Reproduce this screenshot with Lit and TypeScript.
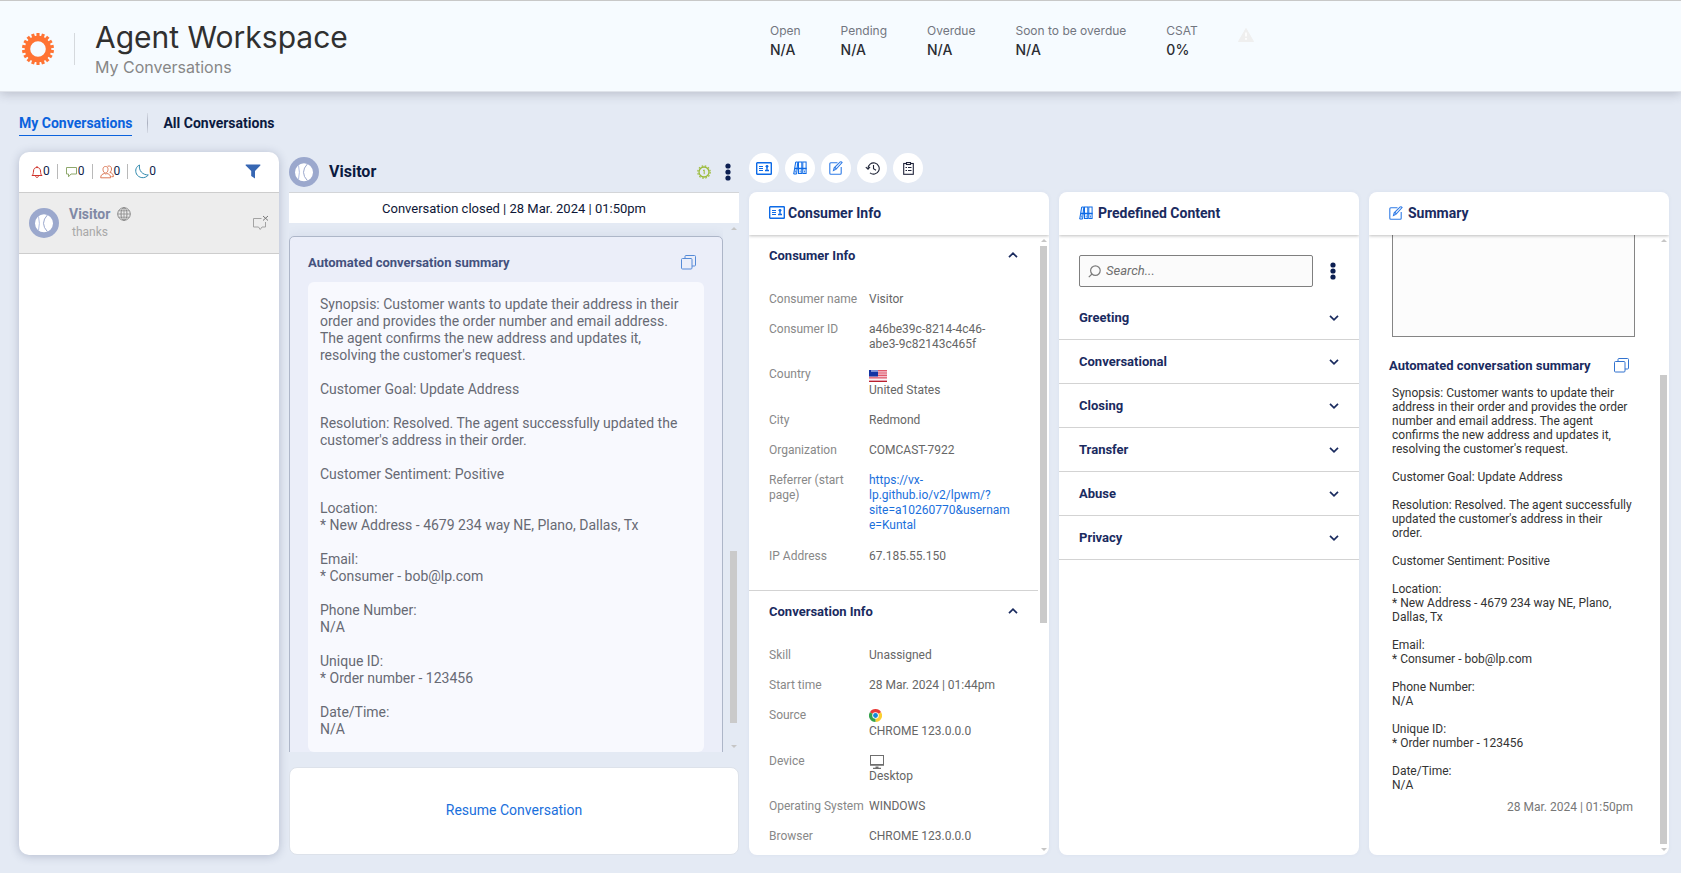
import { LitElement, html, css, svg, nothing } from "lit";
import { customElement, property } from "lit/decorators.js";
import { styleMap } from "lit/directives/style-map.js";

const SUMMARY = `Synopsis: Customer wants to update their address in their order and provides the order number and email address. The agent confirms the new address and updates it, resolving the customer's request.

Customer Goal: Update Address

Resolution: Resolved. The agent successfully updated the customer's address in their order.

Customer Sentiment: Positive

Location:
* New Address - 4679 234 way NE, Plano, Dallas, Tx

Email:
* Consumer - bob@lp.com

Phone Number:
N/A

Unique ID:
* Order number - 123456

Date/Time:
N/A`;

const gearTeeth = (count: number, cx: number, cy: number, r: number, w: number, h: number) =>
  Array.from({ length: count }, (_, i) => svg`<rect x=${cx - w / 2} y=${cy - r} width=${w} height=${h}
    transform="rotate(${(i * 360) / count} ${cx} ${cy})"></rect>`);

const logo = html`<svg class="logo" viewBox="0 0 32 32" width="32" height="32" aria-hidden="true">
  <circle cx="16" cy="16" r="10.5" fill="none" stroke="#ff7333" stroke-width="5.4"></circle>
  <g fill="#ff7333">${gearTeeth(18, 16, 16, 16, 3.1, 4)}</g></svg>`;

const avatar = html`<svg class="avatar" viewBox="0 0 30 30" width="30" height="30" aria-hidden="true">
  <circle cx="15" cy="15" r="15" fill="#9ba8cd"></circle>
  <circle cx="15" cy="15.300" r="9" fill="#fff"></circle>
  <path d="M9.500 8.300q1.800 7 0 14" fill="none" stroke="#b3bfe3" stroke-width="1"></path>
  <path d="M18.500 6.800q-8 8.500 0 17" fill="none" stroke="#9ba8cd" stroke-width="1"></path>
</svg>`;

const bell = html`<svg width="12" height="14" viewBox="0 0 12 14" fill="none" stroke="#d0342c" aria-hidden="true">
  <path d="M1 10.500c1.300-1 1.300-2.300 1.500-4.500C2.700 3.500 4 2.500 6 2.500S9.300 3.500 9.500 6c.2 2.200.2 3.500 1.500 4.500zM6 2.500V1M4.700 11c0 2 2.600 2 2.600 0"></path></svg>`;
const chat = html`<svg width="13" height="12" viewBox="0 0 13 12" fill="none" stroke="#8fa86c" aria-hidden="true">
  <path d="M1.500 1.500h10v6.500H6l-2.500 2.800V8h-2z"></path></svg>`;
const people = html`<svg width="14" height="14" viewBox="0 0 14 14" fill="none" stroke="#dc7a58" aria-hidden="true">
  <path d="M5.500 1.500c1.900 0 2.500 1.300 2.500 3S7 8 5.500 8 3 6.200 3 4.500s.6-3 2.500-3zM.7 12.800c0-3 1.700-3.800 3.800-4.300 1 .6 1.500.6 2.400 0 2 .5 3.700 1.300 3.700 4.300zM7.500 1.200c3-.8 4 .8 4 2.800 0 1.800-.8 2.800-1.700 3.400 2 .5 3.600 1.500 3.600 4.300h-2"></path></svg>`;
const moon = html`<svg width="14" height="15" viewBox="0 0 14 15" fill="none" stroke="#3089ad" aria-hidden="true">
  <path d="M4.500 1C1 2.500-.2 6.500 1.500 10c2 4 8.300 5.300 11.800 1C7.500 11 3.500 6.500 4.500 1z"></path></svg>`;
const funnel = html`<svg width="16" height="15" viewBox="0 0 16 15" fill="#3767b3" aria-hidden="true">
  <path d="M1 .5h14q.8.400.3 1L10 7v7.500L6.200 12V7L.7 1.500Q.3.900 1 .5z"></path></svg>`;
const globe = html`<svg width="14" height="14" viewBox="0 0 14 14" fill="none" stroke="#8a8a8a" aria-hidden="true">
  <circle cx="7" cy="7" r="6.300"></circle><ellipse cx="7" cy="7" rx="3" ry="6.300"></ellipse><path d="M7 .7v12.600M.7 7h12.600M1.700 3.800h10.600M1.700 10.200h10.600" stroke-width=".8"></path></svg>`;
const closedChat = html`<svg width="17" height="17" viewBox="0 0 17 17" fill="none" stroke="#a3a3a3" aria-hidden="true">
  <path d="M9.500 3.500H1.500v8.500h5l1.700 2.500L10 12h3.500V7"></path><path d="M11 1l5 4.500M16 1l-5 4.500" stroke="#777"></path></svg>`;
const rosette = html`<svg width="14" height="14" viewBox="0 0 14 14" fill="none" stroke="#9bbb38" aria-hidden="true">
  <circle cx="7" cy="7" r="5" stroke-width="1.300"></circle><circle cx="7" cy="7" r="6.200" stroke-width="1.200" stroke-dasharray="1.600 1.650"></circle>
  <path d="M6 5.700l1.200-.8v4.300"></path></svg>`;
const dots = html`<svg width="6" height="18" viewBox="0 0 6 18" fill="#0c1f52" aria-hidden="true">
  <circle cx="3" cy="3" r="2.600"></circle><circle cx="3" cy="9" r="2.600"></circle><circle cx="3" cy="15" r="2.600"></circle></svg>`;
const copy = html`<svg width="15" height="15" viewBox="0 0 15 15" fill="none" stroke="#3273cf" aria-hidden="true">
  <rect x=".5" y="3.500" width="10.500" height="10.500" rx="1"></rect><path d="M4 3.500V1.500q0-1 1-1h8.500q1 0 1 1V10q0 1-1 1H11"></path></svg>`;
const warning = html`<svg width="16" height="14" viewBox="0 0 16 14" aria-hidden="true">
  <path d="M8 .5L15.500 13.500H.5z" fill="#efefef" stroke="#efefef" stroke-linejoin="round"></path><path d="M8 4.500v4M8 10v1.700" stroke="#fff" stroke-width="1.600"></path></svg>`;
const idCard = html`<svg width="16" height="13" viewBox="0 0 16 13" fill="none" stroke="#0d6ae6" aria-hidden="true">
  <rect x=".7" y=".7" width="14.600" height="11.600" rx=".6" stroke-width="1.400"></rect><path d="M3 4.500h4M3 6.500h4M3 8.500h4"></path>
  <circle cx="11" cy="4.300" r="1.400" fill="#0d6ae6" stroke="none"></circle><path d="M10.300 5h1.400v2.700h1.300V9.200H9V7.700h1.300z" fill="#0d6ae6" stroke="none"></path></svg>`;
const binders = html`<svg width="14" height="14" viewBox="0 0 14 14" fill="none" stroke="#0d6ae6" aria-hidden="true">
  <path d="M2.700 1h2.100L3.600 13H.7z" fill="#e6f0ff"></path>
  <rect x="5.500" y="1" width="3.300" height="11.500" fill="#fff"></rect><rect x="9.800" y="1" width="3.300" height="11.500" fill="#fff"></rect>
  <path d="M2 7.500h11.600" stroke-width="1.500"></path><path d="M2.300 9.500v2M7.200 9.500v2M11.500 9.500v2" stroke-width=".8"></path></svg>`;
const compose = html`<svg width="14" height="14" viewBox="0 0 14 14" fill="none" stroke="#2f7be6" stroke-width="1.100" aria-hidden="true">
  <path d="M8.500 1.800H1.800q-1 0-1 1v9.400q0 1 1 1h9.400q1 0 1-1V6"></path><path d="M4.500 9.500l.7-2.600 6-6q1.200-.5 1.900.6l-6.200 6.900zM6 6.500l1.500 1.500"></path></svg>`;
const history = html`<svg width="15" height="13" viewBox="0 0 15 13" fill="none" stroke="#1f2437" stroke-width="1.100" aria-hidden="true">
  <path d="M3 6.500A5.600 5.600 0 1 1 5 10.800"></path><path d="M.8 5.200L3 7.200l2-2.400M8.500 3v3.800l2.500 1.400"></path></svg>`;
const clipboard = html`<svg width="11" height="13" viewBox="0 0 11 13" fill="none" stroke="#20243a" stroke-width="1.100" aria-hidden="true">
  <rect x=".7" y="1.500" width="9.600" height="10.800"></rect><rect x="3.500" y=".5" width="4" height="2" fill="#fff"></rect><path d="M2.500 5.500h1.500M5 5.500h3.500M2.500 8.500h1.500M5 8.500h3.500"></path></svg>`;
const magnifier = html`<svg class="magnifier" width="13" height="13" viewBox="0 0 13 13" fill="none" stroke="#7b7b7b" stroke-width="1.200" aria-hidden="true">
  <circle cx="7.400" cy="5.600" r="4.800"></circle><path d="M4 9L.8 12.200"></path></svg>`;
const chevron = (up: boolean) => html`<svg width="10" height="6" viewBox="0 0 10 6" fill="none" stroke="#1a2b5f" stroke-width="1.700" aria-hidden="true">
  <path d=${up ? "M1 5.200L5 1.200l4 4" : "M1 .8L5 4.800l4-4"}></path></svg>`;
const flag = html`<svg class="flag" width="18" height="12" viewBox="0 0 18 12" aria-hidden="true">
  <rect width="18" height="12" fill="#f3c3cf"></rect><path d="M0 .6h18M0 3h18M0 5.400h18M0 7.800h18" stroke="#e05a6b" stroke-width="1.200"></path>
  <path d="M0 9.300h18" stroke="#fff" stroke-width="1"></path><path d="M0 11.400h18" stroke="#b8202e" stroke-width="1.200"></path>
  <rect width="9" height="6.500" fill="#1434a4"></rect><rect x="2" width="7" height="2" fill="#7d8fd6"></rect></svg>`;
const chrome = html`<svg class="chrome" width="13" height="13" viewBox="0 0 26 26" aria-hidden="true">
  <path d="M13 13L1.740 6.500A13 13 0 0 1 24.260 6.500z" fill="#ea3b38"></path><path d="M13 13L24.260 6.500A13 13 0 0 1 13 26z" fill="#fccf31"></path>
  <path d="M13 13v13A13 13 0 0 1 1.740 6.500z" fill="#35a24c"></path><circle cx="13" cy="13" r="6.500" fill="#fff"></circle><circle cx="13" cy="13" r="4.800" fill="#1488d6"></circle></svg>`;
const desktop = html`<svg width="16" height="15" viewBox="0 0 16 15" aria-hidden="true">
  <rect x="1.500" y="1.500" width="13" height="9" fill="none" stroke="#6e6e6e"></rect><path d="M1 11h14M4 14.300h8" stroke="#6e6e6e" stroke-width="1.300"></path><path d="M6.500 12.500h3v1.500h-3z" fill="#6e6e6e"></path></svg>`;

type Field = { label: string; value: string; icon?: unknown; link?: boolean };

const CONSUMER: Field[] = [
  { label: "Consumer name", value: "Visitor" },
  { label: "Consumer ID", value: "a46be39c-8214-4c46-abe3-9c82143c465f" },
  { label: "Country", value: "United States", icon: flag },
  { label: "City", value: "Redmond" },
  { label: "Organization", value: "COMCAST-7922" },
  { label: "Referrer (start page)", value: "https://vx-lp.github.io/v2/lpwm/?site=a10260770&username=Kuntal", link: true },
  { label: "IP Address", value: "67.185.55.150" },
];
const CONVERSATION: Field[] = [
  { label: "Skill", value: "Unassigned" },
  { label: "Start time", value: "28 Mar. 2024 | 01:44pm" },
  { label: "Source", value: "CHROME 123.0.0.0", icon: chrome },
  { label: "Device", value: "Desktop", icon: desktop },
  { label: "Operating System", value: "WINDOWS" },
  { label: "Browser", value: "CHROME 123.0.0.0" },
];
const STATS = [["Open", "N/A"], ["Pending", "N/A"], ["Overdue", "N/A"], ["Soon to be overdue", "N/A"], ["CSAT", "0%"]];
const CATEGORIES = ["Greeting", "Conversational", "Closing", "Transfer", "Abuse", "Privacy"];
const COUNTERS = [
  { icon: bell, name: "Alerts" }, { icon: chat, name: "Messages" },
  { icon: people, name: "Consumers" }, { icon: moon, name: "Idle" },
];
const TOOLS = [
  { icon: idCard, name: "Consumer info" }, { icon: binders, name: "Predefined content" },
  { icon: compose, name: "Summary" }, { icon: history, name: "History" }, { icon: clipboard, name: "Forms" },
];

@customElement("scroll-rail")
class ScrollRail extends LitElement {
  /** Share of the track above the thumb, and the thumb's own share, in percent. */
  @property({ type: Number }) start = 0;
  @property({ type: Number }) size = 100;

  static styles = css`
    :host { display: flex; flex-direction: column; flex: none; width: 7px; margin-right: 2px; }
    .arrow { flex: none; height: 11px; display: flex; align-items: center; justify-content: center; }
    .arrow::before { content: ""; border: 3px solid transparent; border-top: 0; border-bottom-color: #c6c6c6; }
    .down::before { border-top: 3px solid #c6c6c6; border-bottom: 0; }
    .track { flex: 1; min-height: 0; }
    .thumb { background: #cacaca; }
  `;

  render() {
    return html`<div class="arrow"></div>
      <div class="track">
        <div style=${styleMap({ height: `${this.start}%` })}></div>
        <div class="thumb" style=${styleMap({ height: `${this.size}%` })}></div>
      </div>
      <div class="arrow down"></div>`;
  }
}

@customElement("app-root")
class AppRoot extends LitElement {
  static styles = css`
    :host {
      display: flex; flex-direction: column; box-sizing: border-box; height: 100vh; min-height: 640px;
      background: #e4eaf4; color: #0f1e4b; overflow: hidden;
      font: 12px/15px Roboto, "Liberation Sans", sans-serif;
    }
    *, *::before { box-sizing: border-box; }
    h1, h2, h3, p, dl, dd, dt, ul { margin: 0; padding: 0; font: inherit; }
    svg { display: block; flex: none; }
    button { border: 0; padding: 0; background: none; font: inherit; color: inherit; text-align: left; cursor: pointer; }
    a { color: #1a6fdc; text-decoration: none; }
    ul { list-style: none; }

    .columns { display: grid; grid-template-columns: 260px minmax(0, 450fr) minmax(0, 920fr); column-gap: 10px; padding: 0 12px 0 19px; }

    .top { flex: none; height: 92px; border-top: 1px solid #c8c8c8; border-bottom: 1px solid #dfe3ea; background: #f6fbff; box-shadow: 0 2px 10px rgba(50, 50, 70, .24); font-family: Inter, "Liberation Sans", sans-serif; }
    .brand { grid-column: span 2; display: flex; align-items: center; padding: 6px 0 0 3px; }
    .rule { width: 1px; height: 32px; margin: 0 20px; background: #d5d9dd; }
    .titles h1 { color: #303030; font-size: 30px; line-height: 36px; }
    .titles p { color: #878787; font-size: 16px; line-height: 24px; }
    .stats { display: flex; gap: 40px; padding: 21px 0 0 21px; }
    .stats dt { color: #727680; font-size: 12px; line-height: 18px; white-space: nowrap; }
    .stats dd { color: #2b2d33; font-size: 14px; line-height: 20px; font-weight: 500; }
    .alert { padding-top: 6px; }

    .tabs { flex: none; display: flex; align-items: center; height: 60px; padding: 2px 19px 0; font-size: 14px; line-height: 18px; font-weight: 700; }
    .tab { color: #0b1a40; padding: 4px 0 3px; border-bottom: 1px solid transparent; }
    .tab.active { color: #0a62dd; border-color: #0a62dd; }
    .tab-rule { width: 1px; height: 20px; margin: 0 15px; background: linear-gradient(#d7dce6, #aab0bf, #d7dce6); }

    .board { flex: 1; min-height: 0; padding-bottom: 18px; }
    .queue, .talk, .side { display: flex; flex-direction: column; min-width: 0; min-height: 0; }

    .queue { background: #fff; border-radius: 10px; box-shadow: 0 1px 10px rgba(40, 50, 90, .25); }
    .counters { display: flex; align-items: center; height: 41px; padding: 0 18px 1px 12px; border-bottom: 1px solid #cdcdcd; }
    .counter { display: flex; align-items: center; font-size: 12px; }
    .counter + .counter { margin-left: 7px; padding-left: 7px; border-left: 1px solid #b9b9b9; }
    .filter { margin-left: auto; }
    .entry { display: flex; align-items: center; height: 61px; padding: 0 10px; gap: 10px; background: #ededed; border-bottom: 1px solid #cdcdcd; }
    .entry-text { flex: 1; padding-bottom: 2px; }
    .entry-name { display: flex; align-items: center; gap: 7px; color: #8089a5; font-size: 14px; line-height: 20px; font-weight: 700; }
    .entry-last { color: #a8a8a8; font-size: 12px; line-height: 17px; padding-left: 3px; }

    .talk-head { display: flex; align-items: center; gap: 10px; height: 41px; padding: 0 8px 0 0; border-bottom: 1px solid #d3d5d8; }
    .talk-head h2 { flex: 1; font-size: 16px; line-height: 20px; font-weight: 700; color: #0b1a40; }
    .talk-head .menu { margin-left: 4px; }
    .closed { background: #fff; height: 30px; padding-top: 1px; font-size: 13px; line-height: 29px; text-align: center; color: #0d1636; }
    .thread { display: flex; flex: 1; min-height: 0; gap: 7px; }
    .feed { flex: 1; min-width: 0; overflow: auto; scrollbar-width: none; padding-top: 13px; }
    .card { padding: 18px 18px 20px; background: #ebeef9; border: 1px solid #adb6c8; border-radius: 5px; box-shadow: 0 0 12px rgba(60, 80, 140, .1); color: #44527e; }
    .card-head { display: flex; align-items: center; justify-content: space-between; height: 15px; padding-right: 8px; font-size: 13px; font-weight: 700; }
    .card-head svg { opacity: .8; }
    .bubble { margin-top: 12px; padding: 14px 12px; border-radius: 6px; background: #f8f9fe; color: #676a74; font-size: 14px; line-height: 17px; white-space: pre-line; }
    .resume { flex: none; margin: 15px 0 0; height: 88px; padding-bottom: 2px; border: 1px solid #dde2ea; border-radius: 8px; background: #fff; color: #1a6fdc; font-size: 14px; text-align: center; }

    .tools { flex: none; display: flex; gap: 6px; height: 40px; padding-top: 1px; }
    .tool { display: flex; align-items: center; justify-content: center; width: 30px; height: 30px; border-radius: 50%; background: #fff; }
    .widgets { flex: 1; min-height: 0; display: grid; grid-template-columns: repeat(3, minmax(0, 1fr)); grid-template-rows: minmax(0, 1fr); gap: 10px; }
    .widget { display: flex; flex-direction: column; min-height: 0; background: #fff; border-radius: 8px; overflow: hidden; box-shadow: 0 0 4px rgba(60, 80, 140, .06); }
    .widget-head { position: relative; flex: none; display: flex; align-items: center; gap: 5px; height: 43px; padding: 0 20px 2px; box-shadow: 0 1px 3px rgba(0, 0, 0, .25); font-size: 14px; line-height: 18px; font-weight: 700; color: #1a2b5f; }
    .widget-head.wide-icon { gap: 3px; }
    .widget-body { display: flex; flex: 1; min-height: 0; }
    .scroll { flex: 1; min-width: 0; overflow: auto; scrollbar-width: none; margin-right: 2px; }

    .section { border-bottom: 1px solid #d3d3d3; padding-bottom: 26px; }
    .section-head, .category { display: flex; align-items: center; justify-content: space-between; width: 100%; height: 44px; padding: 0 20px; color: #1a2b5f; font-size: 13px; font-weight: 700; }
    .section-head { height: 40px; }
    .fields { display: flex; flex-direction: column; gap: 15px; padding: 17px 20px 0; }
    .field { display: grid; grid-template-columns: 95px minmax(0, 141px); column-gap: 5px; }
    .field dt { color: #888; }
    .field dd { color: #666; overflow-wrap: anywhere; }
    .field a { display: block; padding-bottom: 1px; }
    .flag { margin: 3px 0 1px; }
    .chrome { margin: 1px 0 2px; }

    .search { display: flex; align-items: center; gap: 17px; padding: 20px 23px 9px 20px; }
    .search-box { flex: 1; display: flex; align-items: center; gap: 5px; height: 32px; padding: 0 8px; border: 1px solid #7f7f7f; border-radius: 2px; background: #fbfbfb; }
    .search-box input { flex: 1; min-width: 0; border: 0; padding: 0; outline: 0; background: none; font: italic 13px/16px Roboto, sans-serif; }
    .search-box input::placeholder { color: #6f6f6f; }
    .category { border-bottom: 1px solid #d3d3d3; }

    .summary { padding: 0 23px 0 20px; }
    .summary textarea { display: block; width: calc(100% - 3px); height: 102px; margin-left: 3px; border: 1px solid #858585; border-top: 0; background: #fcfcfc; resize: none; }
    .summary-head { display: flex; align-items: center; justify-content: space-between; height: 49px; padding: 8px 6px 0 0; font-size: 13px; font-weight: 700; color: #1a2b5f; }
    .summary-text { padding-left: 3px; color: #333; line-height: 14px; white-space: pre-line; }
    .stamp { padding: 8px 2px 0 0; text-align: right; color: #777; }
  `;

  private fields(list: Field[]) {
    return html`<dl class="fields">${list.map((f) => html`
      <div class="field">
        <dt>${f.label}</dt>
        <dd>${f.icon ?? nothing}${f.link ? html`<a href="#referrer">${f.value}</a>` : f.value}</dd>
      </div>`)}</dl>`;
  }

  private section(title: string, list: Field[]) {
    return html`<section class="section">
      <button class="section-head" aria-expanded="true">${title}${chevron(true)}</button>
      ${this.fields(list)}
    </section>`;
  }

  render() {
    return html`
      <header class="top columns">
        <div class="brand">${logo}<span class="rule"></span>
          <div class="titles"><h1>Agent Workspace</h1><p>My Conversations</p></div>
        </div>
        <dl class="stats">
          ${STATS.map(([label, value]) => html`<div><dt>${label}</dt><dd>${value}</dd></div>`)}
          <div class="alert">${warning}</div>
        </dl>
      </header>

      <nav class="tabs">
        <a class="tab active" href="#mine">My Conversations</a>
        <span class="tab-rule"></span>
        <a class="tab" href="#all">All Conversations</a>
      </nav>

      <main class="board columns">
        <section class="queue">
          <div class="counters">
            ${COUNTERS.map((c) => html`<span class="counter" title=${c.name}>${c.icon}0</span>`)}
            <button class="filter" aria-label="Filter">${funnel}</button>
          </div>
          <div class="entry">
            ${avatar}
            <div class="entry-text">
              <div class="entry-name">Visitor ${globe}</div>
              <div class="entry-last">thanks</div>
            </div>
            ${closedChat}
          </div>
        </section>

        <section class="talk">
          <div class="talk-head">${avatar}<h2>Visitor</h2>${rosette}
            <button class="menu" aria-label="Conversation menu">${dots}</button></div>
          <p class="closed">Conversation closed | 28 Mar. 2024 | 01:50pm</p>
          <div class="thread">
            <div class="feed">
              <article class="card">
                <div class="card-head"><h3>Automated conversation summary</h3><button aria-label="Copy summary">${copy}</button></div>
                <div class="bubble">${SUMMARY}</div>
              </article>
            </div>
            <scroll-rail .start=${62.5} .size=${34}></scroll-rail>
          </div>
          <button class="resume">Resume Conversation</button>
        </section>

        <section class="side">
          <div class="tools">${TOOLS.map((t) => html`<button class="tool" aria-label=${t.name}>${t.icon}</button>`)}</div>
          <div class="widgets">
            <section class="widget">
              <h2 class="widget-head wide-icon">${idCard}Consumer Info</h2>
              <div class="widget-body">
                <div class="scroll">
                  ${this.section("Consumer Info", CONSUMER)}
                  ${this.section("Conversation Info", CONVERSATION)}
                </div>
                <scroll-rail .start=${0} .size=${63}></scroll-rail>
              </div>
            </section>

            <section class="widget">
              <h2 class="widget-head">${binders}Predefined Content</h2>
              <div class="search">
                <label class="search-box">${magnifier}<input type="text" aria-label="Search" placeholder="Search..." /></label>
                <button aria-label="Content menu">${dots}</button>
              </div>
              <ul>${CATEGORIES.map((c) => html`<li><button class="category" aria-expanded="false">${c}${chevron(false)}</button></li>`)}</ul>
            </section>

            <section class="widget">
              <h2 class="widget-head">${compose}Summary</h2>
              <div class="widget-body">
                <div class="scroll summary">
                  <textarea aria-label="Summary notes"></textarea>
                  <div class="summary-head"><h3>Automated conversation summary</h3><button aria-label="Copy summary">${copy}</button></div>
                  <div class="summary-text">${SUMMARY}</div>
                  <p class="stamp">28 Mar. 2024 | 01:50pm</p>
                </div>
                <scroll-rail .start=${21.5} .size=${78.5}></scroll-rail>
              </div>
            </section>
          </div>
        </section>
      </main>`;
  }
}
